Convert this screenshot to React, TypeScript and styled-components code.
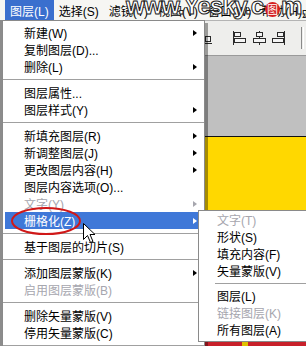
import React from 'react'
import styled, { createGlobalStyle } from 'styled-components'

const FONT = `"Liberation Sans", "Noto Sans CJK SC", sans-serif`

const GlobalStyle = createGlobalStyle`
  body {
    margin: 0;
    background: #fff;
  }
`

type Entry =
  | { sep: true }
  | { label: string; sub?: boolean; off?: boolean; active?: boolean }

const mainItems: Entry[] = [
  { label: '新建(W)', sub: true },
  { label: '复制图层(D)...' },
  { label: '删除(L)', sub: true },
  { sep: true },
  { label: '图层属性...' },
  { label: '图层样式(Y)', sub: true },
  { sep: true },
  { label: '新填充图层(R)', sub: true },
  { label: '新调整图层(J)', sub: true },
  { label: '更改图层内容(H)', sub: true },
  { label: '图层内容选项(O)...' },
  { label: '文字(Y)', sub: true, off: true },
  { label: '栅格化(Z)', sub: true, active: true },
  { sep: true },
  { label: '基于图层的切片(S)' },
  { sep: true },
  { label: '添加图层蒙版(K)', sub: true },
  { label: '启用图层蒙版(B)', off: true },
  { sep: true },
  { label: '删除矢量蒙版(V)' },
  { label: '停用矢量蒙版(C)' },
  { sep: true },
]

const subItems: Entry[] = [
  { label: '文字(T)', off: true },
  { label: '形状(S)' },
  { label: '填充内容(F)' },
  { label: '矢量蒙版(V)' },
  { sep: true },
  { label: '图层(L)' },
  { label: '链接图层(K)', off: true },
  { label: '所有图层(A)' },
]

const menuTitles = ['图层(L)', '选择(S)', '滤镜(T)', '视图(V)', '窗口(W)', '帮助(H)']

export default function App() {
  return (
    <Screen>
      <GlobalStyle />
      <MenuBar>
        {menuTitles.map((t, i) => (
          <MenuTitle key={t} active={i === 0}>
            {t}
          </MenuTitle>
        ))}
      </MenuBar>
      <Workspace>
        <Toolbar>
          <ToolIcon>
            <rect x="1.5" y="1.5" width="4" height="9" />
            <rect x="7.5" y="5.5" width="5" height="5" />
            <line x1="0" y1="12.5" x2="14" y2="12.5" />
          </ToolIcon>
          <ToolGap />
          <ToolIcon>
            <line x1="1.5" y1="0" x2="1.5" y2="14" />
            <rect x="2.5" y="1.5" width="6" height="4" />
            <rect x="2.5" y="7.5" width="11" height="4" />
          </ToolIcon>
          <ToolIcon>
            <line x1="7.5" y1="0" x2="7.5" y2="14" />
            <rect x="4.5" y="1.5" width="6" height="4" />
            <rect x="1.5" y="7.5" width="12" height="4" />
          </ToolIcon>
          <ToolIcon>
            <line x1="12.5" y1="0" x2="12.5" y2="14" />
            <rect x="5.5" y="1.5" width="6" height="4" />
            <rect x="0.5" y="7.5" width="11" height="4" />
          </ToolIcon>
          <ToolDivider />
        </Toolbar>
        <Pasteboard />
        <Photo>
          <PhotoEdge />
        </Photo>
      </Workspace>

      <Watermark>
        www.Yesky.c<Stamp>图</Stamp>m,
      </Watermark>

      <DropMenu>
        {mainItems.map((it, i) =>
          'sep' in it ? (
            <Separator key={i} />
          ) : (
            <Item key={i} off={it.off} active={it.active}>
              {it.label}
              {it.sub && <Arrow off={it.off} active={it.active} />}
            </Item>
          )
        )}
      </DropMenu>

      <SubMenu>
        {subItems.map((it, i) =>
          'sep' in it ? (
            <Separator key={i} inset />
          ) : (
            <SubItem key={i} off={it.off}>
              {it.label}
            </SubItem>
          )
        )}
      </SubMenu>

      <Ring viewBox="0 0 72 30">
        <ellipse cx="36" cy="15" rx="34" ry="13" />
      </Ring>

      <Cursor viewBox="0 0 13 21">
        <path d="M0.5 0.5 L0.5 16.5 L4.5 12.5 L7.5 19.5 L10 18.5 L7 11.5 L12 11.5 Z" />
      </Cursor>
    </Screen>
  )
}

const Screen = styled.div`
  position: relative;
  width: 306px;
  height: 346px;
  overflow: hidden;
  display: flex;
  flex-direction: column;
  font-family: ${FONT};
  font-size: 12px;
  color: #000;
`

const MenuBar = styled.div`
  height: 20px;
  display: flex;
  padding-left: 5px;
  background: #f6f6f3;
  white-space: nowrap;
`

const MenuTitle = styled.div<{ active?: boolean }>`
  display: flex;
  align-items: center;
  padding: 0 5px;
  color: ${p => (p.active ? '#fff' : '#000')};
  background: ${p => (p.active ? '#3a6fce' : 'transparent')};
`

const Workspace = styled.div`
  flex: 1;
  display: flex;
  flex-direction: column;
  border-left: 2px solid #8c8c8c;
`

const Toolbar = styled.div`
  height: 34px;
  display: flex;
  align-items: center;
  justify-content: flex-end;
  gap: 6px;
  padding-right: 2px;
  background: #eeeeec;
  border-top: 1px solid #b4b4b4;
  border-bottom: 1px solid #9a9a9a;
`

const ToolIcon = styled.svg.attrs({ viewBox: '0 0 14 14' })`
  width: 14px;
  height: 14px;
  fill: #f4f4f4;
  stroke: #2a2a2a;
  stroke-width: 1;
`

const ToolGap = styled.div`
  width: 8px;
`

const ToolDivider = styled.div`
  width: 1px;
  height: 22px;
  margin-left: 9px;
  border-left: 1px solid #8a8a8a;
  border-right: 1px solid #fff;
`

const Pasteboard = styled.div`
  height: 80px;
  background: #c0c0c0;
  border-bottom: 1px solid #111;
`

const Photo = styled.div`
  flex: 1;
  display: flex;
  flex-direction: column;
  justify-content: flex-end;
  background: #ffd800;
`

const PhotoEdge = styled.div`
  height: 4px;
  background: linear-gradient(
    to right,
    #c8202a 0 62%,
    #ffd800 62% 64%,
    #c8202a 64% 79%,
    #e0c000 79% 81%,
    #c8202a 81%
  );
`

const Watermark = styled.div`
  position: absolute;
  left: 126px;
  top: -8px;
  display: flex;
  align-items: center;
  font-family: "Liberation Sans", sans-serif;
  font-weight: bold;
  font-size: 24px;
  letter-spacing: -1px;
  color: #fff;
  -webkit-text-stroke: 1px #222;
  white-space: nowrap;
  pointer-events: none;
`

const Stamp = styled.span`
  display: inline-flex;
  align-items: center;
  justify-content: center;
  width: 15px;
  height: 15px;
  margin: 6px 1px 0 2px;
  border-radius: 50%;
  background: #d42020;
  font-family: ${FONT};
  font-size: 11px;
  font-weight: normal;
  letter-spacing: 0;
  -webkit-text-stroke: 0;
  color: #fff;
`

const DropMenu = styled.div`
  position: absolute;
  left: 2px;
  top: 20px;
  width: 199px;
  padding: 3px 1px;
  background: #fff;
  border: 1px solid #8a8a8a;
  box-shadow: 3px 3px 0 rgba(0, 0, 0, 0.35);
`

const Item = styled.div<{ off?: boolean; active?: boolean }>`
  height: 17px;
  margin: 0 1px;
  padding-left: 19px;
  display: flex;
  align-items: center;
  white-space: nowrap;
  color: ${p => (p.active ? '#fff' : p.off ? '#a6a6ae' : '#000')};
  background: ${p => (p.active ? '#3f78d8' : 'transparent')};
`

const Arrow = styled.span<{ off?: boolean; active?: boolean }>`
  margin-left: auto;
  margin-right: 5px;
  width: 0;
  height: 0;
  border-top: 3.5px solid transparent;
  border-bottom: 3.5px solid transparent;
  border-left: 4px solid
    ${p => (p.active ? '#fff' : p.off ? '#a6a6ae' : '#000')};
`

const Separator = styled.div<{ inset?: boolean }>`
  height: ${p => (p.inset ? 8 : 9)}px;
  margin: ${p => (p.inset ? '0 4px 0 15px' : '0 -1px')};
  display: flex;
  align-items: center;

  &::before {
    content: '';
    flex: 1;
    height: 1px;
    background: #a0a0a0;
  }
`

const SubMenu = styled.div`
  position: absolute;
  left: 198px;
  top: 210px;
  width: 120px;
  padding: 0 1px 3px;
  background: #fff;
  border: 1px solid #8a8a8a;
`

const SubItem = styled.div<{ off?: boolean }>`
  height: 17px;
  margin: 0 1px;
  padding-left: 16px;
  display: flex;
  align-items: center;
  white-space: nowrap;
  color: ${p => (p.off ? '#a6a6ae' : '#000')};
`

const Ring = styled.svg`
  position: absolute;
  left: 10px;
  top: 206px;
  width: 72px;
  height: 30px;
  fill: none;
  stroke: #d01818;
  stroke-width: 2;
  pointer-events: none;
`

const Cursor = styled.svg`
  position: absolute;
  left: 83px;
  top: 223px;
  width: 13px;
  height: 21px;
  fill: #fff;
  stroke: #000;
  stroke-width: 1;
  pointer-events: none;
`
